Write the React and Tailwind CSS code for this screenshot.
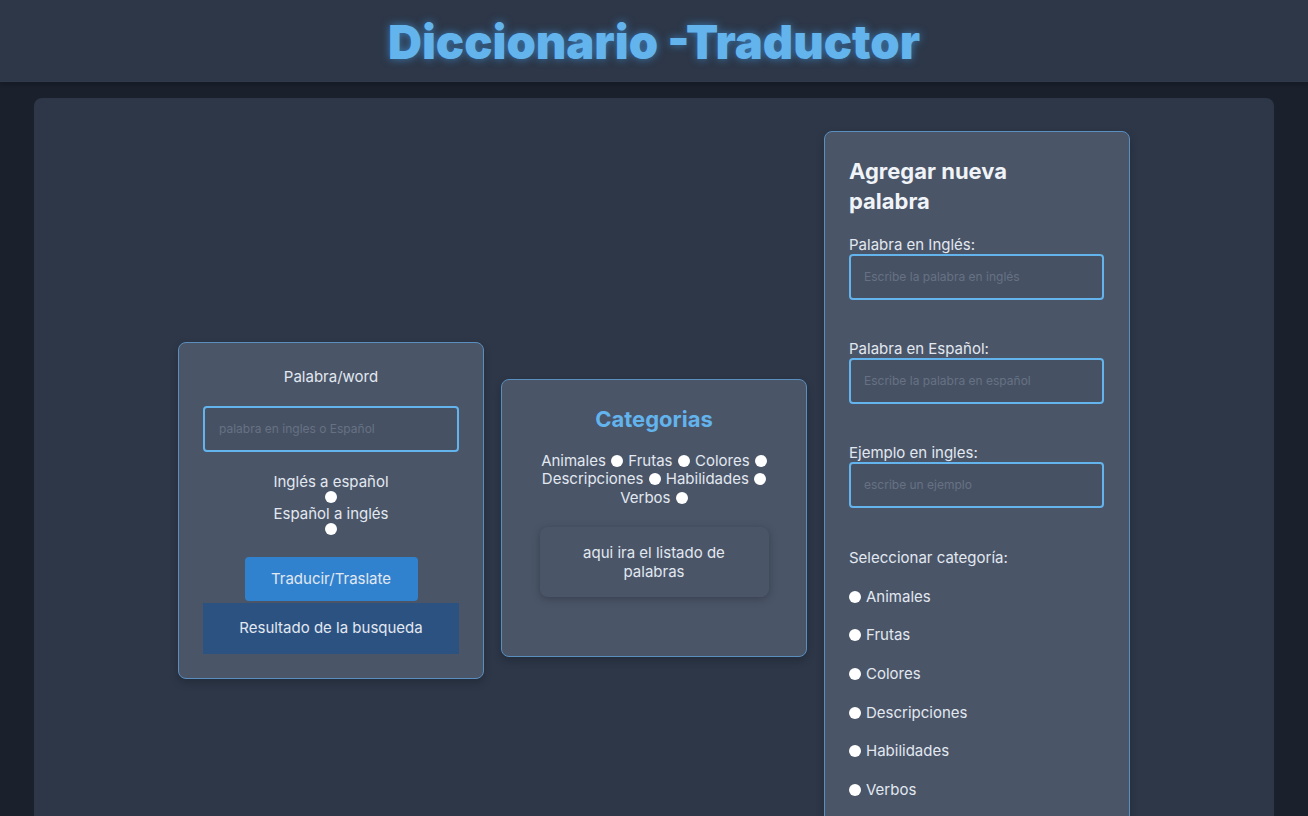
import React from "react";

const Dot = ({ className = "" }) => (
  <span className={"inline-block h-[12px] w-[12px] rounded-full bg-white align-[-1px] " + className} />
);

export default function App() {
  const cats = ["Animales", "Frutas", "Colores", "Descripciones", "Habilidades", "Verbos"];
  return (
    <div
      className="min-h-[816px] bg-[#1a202c] text-[#e2e8f0]"
      style={{ fontFamily: "Inter, 'Noto Sans', sans-serif" }}
    >
      <header className="flex h-[82px] items-center justify-center bg-[#2d3748] border-b border-[#2f3a4c] shadow-[0_2px_4px_rgba(0,0,0,0.2)]">
        <h1 className="mt-[3px] text-[47px] font-black tracking-[0px] text-[#63b3ed] [text-shadow:0_0_8px_rgba(66,153,225,0.7)]">
          Diccionario -Traductor
        </h1>
      </header>

      <main className="mx-[34px] mt-[16px] h-[760px] overflow-hidden rounded-t-lg bg-[#2d3748] pt-[33px]">
        <div className="flex items-center justify-center gap-[17px]">
          {/* Card 1 */}
          <section className="mb-[15px] flex w-[306px] flex-col items-center rounded-lg border border-[#5a8ebf] bg-[#4a5568] p-6 shadow-[0_4px_8px_rgba(0,0,0,0.2)]">
            <p className="text-[15px] leading-[20px]">Palabra/word</p>
            <div className="mt-[19px] flex h-[46px] w-full items-center rounded border-2 border-[#63b3ed] bg-[#465163] px-[14px] text-[12px] text-[#667184]">
              palabra en ingles o Español
            </div>
            <div className="mt-[21px] flex flex-col items-center text-[15px] leading-[18px]">
              <span>Inglés a español</span>
              <Dot className="block" />
              <span className="mt-[2px]">Español a inglés</span>
              <Dot className="block" />
            </div>
            <button className="mt-[22px] flex h-[44px] w-[173px] items-center justify-center rounded-sm bg-[#3182ce] text-[15px] text-[#e2e8f0]">
              Traducir/Traslate
            </button>
            <div className="mt-[2px] flex h-[51px] w-full items-center justify-center bg-[#2c5282] text-[15px]">
              Resultado de la busqueda
            </div>
          </section>

          {/* Card 2 */}
          <section className="flex w-[306px] flex-col items-center rounded-lg border border-[#5a8ebf] bg-[#4a5568] px-6 pt-6 pb-[59px] shadow-[0_4px_8px_rgba(0,0,0,0.2)]">
            <h2 className="text-[22px] font-bold leading-[30px] text-[#63b3ed]">Categorias</h2>
            <p className="mt-[18px] text-center text-[15px] leading-[18.5px] [word-spacing:1px]">
              Animales <Dot /> Frutas <Dot /> Colores <Dot />
              <br />
              Descripciones <Dot /> Habilidades <Dot />
              <br />
              Verbos <Dot />
            </p>
            <div className="mt-[20px] w-[229px] rounded-lg bg-[#4a5568] px-4 py-4 text-center text-[15px] leading-[19px] shadow-[0_2px_8px_rgba(0,0,0,0.25)]">
              aqui ira el listado de palabras
            </div>
          </section>

          {/* Card 3 */}
          <section className="flex h-[774px] w-[306px] flex-col rounded-lg border border-[#5a8ebf] bg-[#4a5568] p-6 shadow-[0_4px_8px_rgba(0,0,0,0.2)]">
            <h2 className="mb-[19px] text-[22px] font-bold leading-[30px] text-[#f0f3f7]">
              Agregar nueva
              <br />
              palabra
            </h2>
            {[
              ["Palabra en Inglés:", "Escribe la palabra en inglés"],
              ["Palabra en Español:", "Escribe la palabra en español"],
              ["Ejemplo en ingles:", "escribe un ejemplo"],
            ].map(([label, ph]) => (
              <div key={label} className="mb-[39px]">
                <p className="pt-[1px] text-[15px] leading-[18px]">{label}</p>
                <div className="flex h-[46px] w-[255px] items-center rounded border-2 border-[#63b3ed] bg-[#465163] px-[13px] text-[12px] text-[#667184]">
                  {ph}
                </div>
              </div>
            ))}
            <p className="mt-[1px] text-[15px] leading-[20px]">Seleccionar categoría:</p>
            {cats.map((c) => (
              <div key={c} className="mt-[18.7px] flex items-center gap-[5px] text-[15px] leading-[20px]">
                <Dot />
                <span>{c}</span>
              </div>
            ))}
          </section>
        </div>
      </main>
    </div>
  );
}
